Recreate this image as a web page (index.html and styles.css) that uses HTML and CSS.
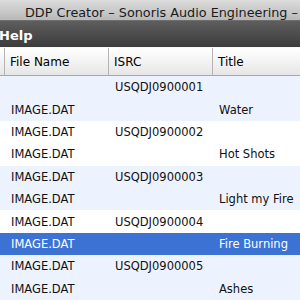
FILE: index.html
```html
<!DOCTYPE html>
<html lang="en">
<head>
  <meta charset="UTF-8">
  <title>DDP Creator</title>
  <link rel="stylesheet" href="styles.css">
</head>
<body>
  <div class="window">
    <div class="titlebar">DDP Creator – Sonoris Audio Engineering –</div>
    <div class="menubar"><span class="menu-item">Help</span></div>

    <div class="table">
      <div class="row header">
        <div class="cell edge"></div>
        <div class="cell">File Name</div>
        <div class="cell">ISRC</div>
        <div class="cell last">Title</div>
      </div>

      <div class="row alt">
        <div class="cell edge"></div>
        <div class="cell"></div>
        <div class="cell">USQDJ0900001</div>
        <div class="cell"></div>
      </div>
      <div class="row alt">
        <div class="cell edge"></div>
        <div class="cell">IMAGE.DAT</div>
        <div class="cell"></div>
        <div class="cell">Water</div>
      </div>
      <div class="row">
        <div class="cell edge"></div>
        <div class="cell">IMAGE.DAT</div>
        <div class="cell">USQDJ0900002</div>
        <div class="cell"></div>
      </div>
      <div class="row">
        <div class="cell edge"></div>
        <div class="cell">IMAGE.DAT</div>
        <div class="cell"></div>
        <div class="cell">Hot Shots</div>
      </div>
      <div class="row alt">
        <div class="cell edge"></div>
        <div class="cell">IMAGE.DAT</div>
        <div class="cell">USQDJ0900003</div>
        <div class="cell"></div>
      </div>
      <div class="row alt">
        <div class="cell edge"></div>
        <div class="cell">IMAGE.DAT</div>
        <div class="cell"></div>
        <div class="cell">Light my Fire</div>
      </div>
      <div class="row">
        <div class="cell edge"></div>
        <div class="cell">IMAGE.DAT</div>
        <div class="cell">USQDJ0900004</div>
        <div class="cell"></div>
      </div>
      <div class="row selected">
        <div class="cell edge"></div>
        <div class="cell">IMAGE.DAT</div>
        <div class="cell"></div>
        <div class="cell">Fire Burning</div>
      </div>
      <div class="row alt">
        <div class="cell edge"></div>
        <div class="cell">IMAGE.DAT</div>
        <div class="cell">USQDJ0900005</div>
        <div class="cell"></div>
      </div>
      <div class="row alt">
        <div class="cell edge"></div>
        <div class="cell">IMAGE.DAT</div>
        <div class="cell"></div>
        <div class="cell">Ashes</div>
      </div>
    </div>
  </div>
</body>
</html>
```

FILE: styles.css
```css
* {
  margin: 0;
  padding: 0;
  box-sizing: border-box;
}

body {
  font-family: 'DejaVu Sans', 'Liberation Sans', sans-serif;
  background: #ffffff;
  width: 300px;
  height: 300px;
  overflow: hidden;
}

.window {
  width: 300px;
  overflow: hidden;
}

.titlebar {
  height: 20px;
  background: linear-gradient(#dcdcdc, #b9b9b9);
  color: #1a1a1a;
  font-size: 12.8px;
  line-height: 19px;
  padding-top: 3px;
  padding-left: 25px;
  white-space: nowrap;
  overflow: hidden;
}

.menubar {
  height: 27px;
  background: linear-gradient(#5e5e5e, #3c3c3c);
  border-top: 1px solid #6e6e6e;
  display: flex;
  align-items: center;
}

.menu-item {
  color: #ffffff;
  font-weight: bold;
  font-size: 13px;
  margin-left: -1px;
  padding-top: 2px;
}

.table {
  font-size: 11.5px;
  color: #111111;
}

.row {
  display: grid;
  grid-template-columns: 5px 104px 104px 1fr;
  height: 22.4px;
  align-items: center;
  white-space: nowrap;
}

.cell {
  padding-left: 6px;
  overflow: hidden;
}

.cell.edge {
  padding: 0;
}

.row.header {
  height: 29px;
  align-items: stretch;
  background: linear-gradient(#ffffff, #f3f3f3 50%, #e6e6e6);
  border-top: 1px solid #f8f8f8;
  border-bottom: 1px solid #a8a8a8;
  font-size: 12px;
  color: #000000;
}

.row.header .cell {
  display: flex;
  align-items: center;
  padding-left: 5px;
  border-right: 1px solid #b4b4b4;
}

.row.header .cell.edge {
  padding-left: 0;
}

.row.header .cell.last {
  border-right: none;
}

.row.alt {
  background: #edf3fe;
}

.row.selected {
  background: #3d72d5;
  color: #ffffff;
}
```
